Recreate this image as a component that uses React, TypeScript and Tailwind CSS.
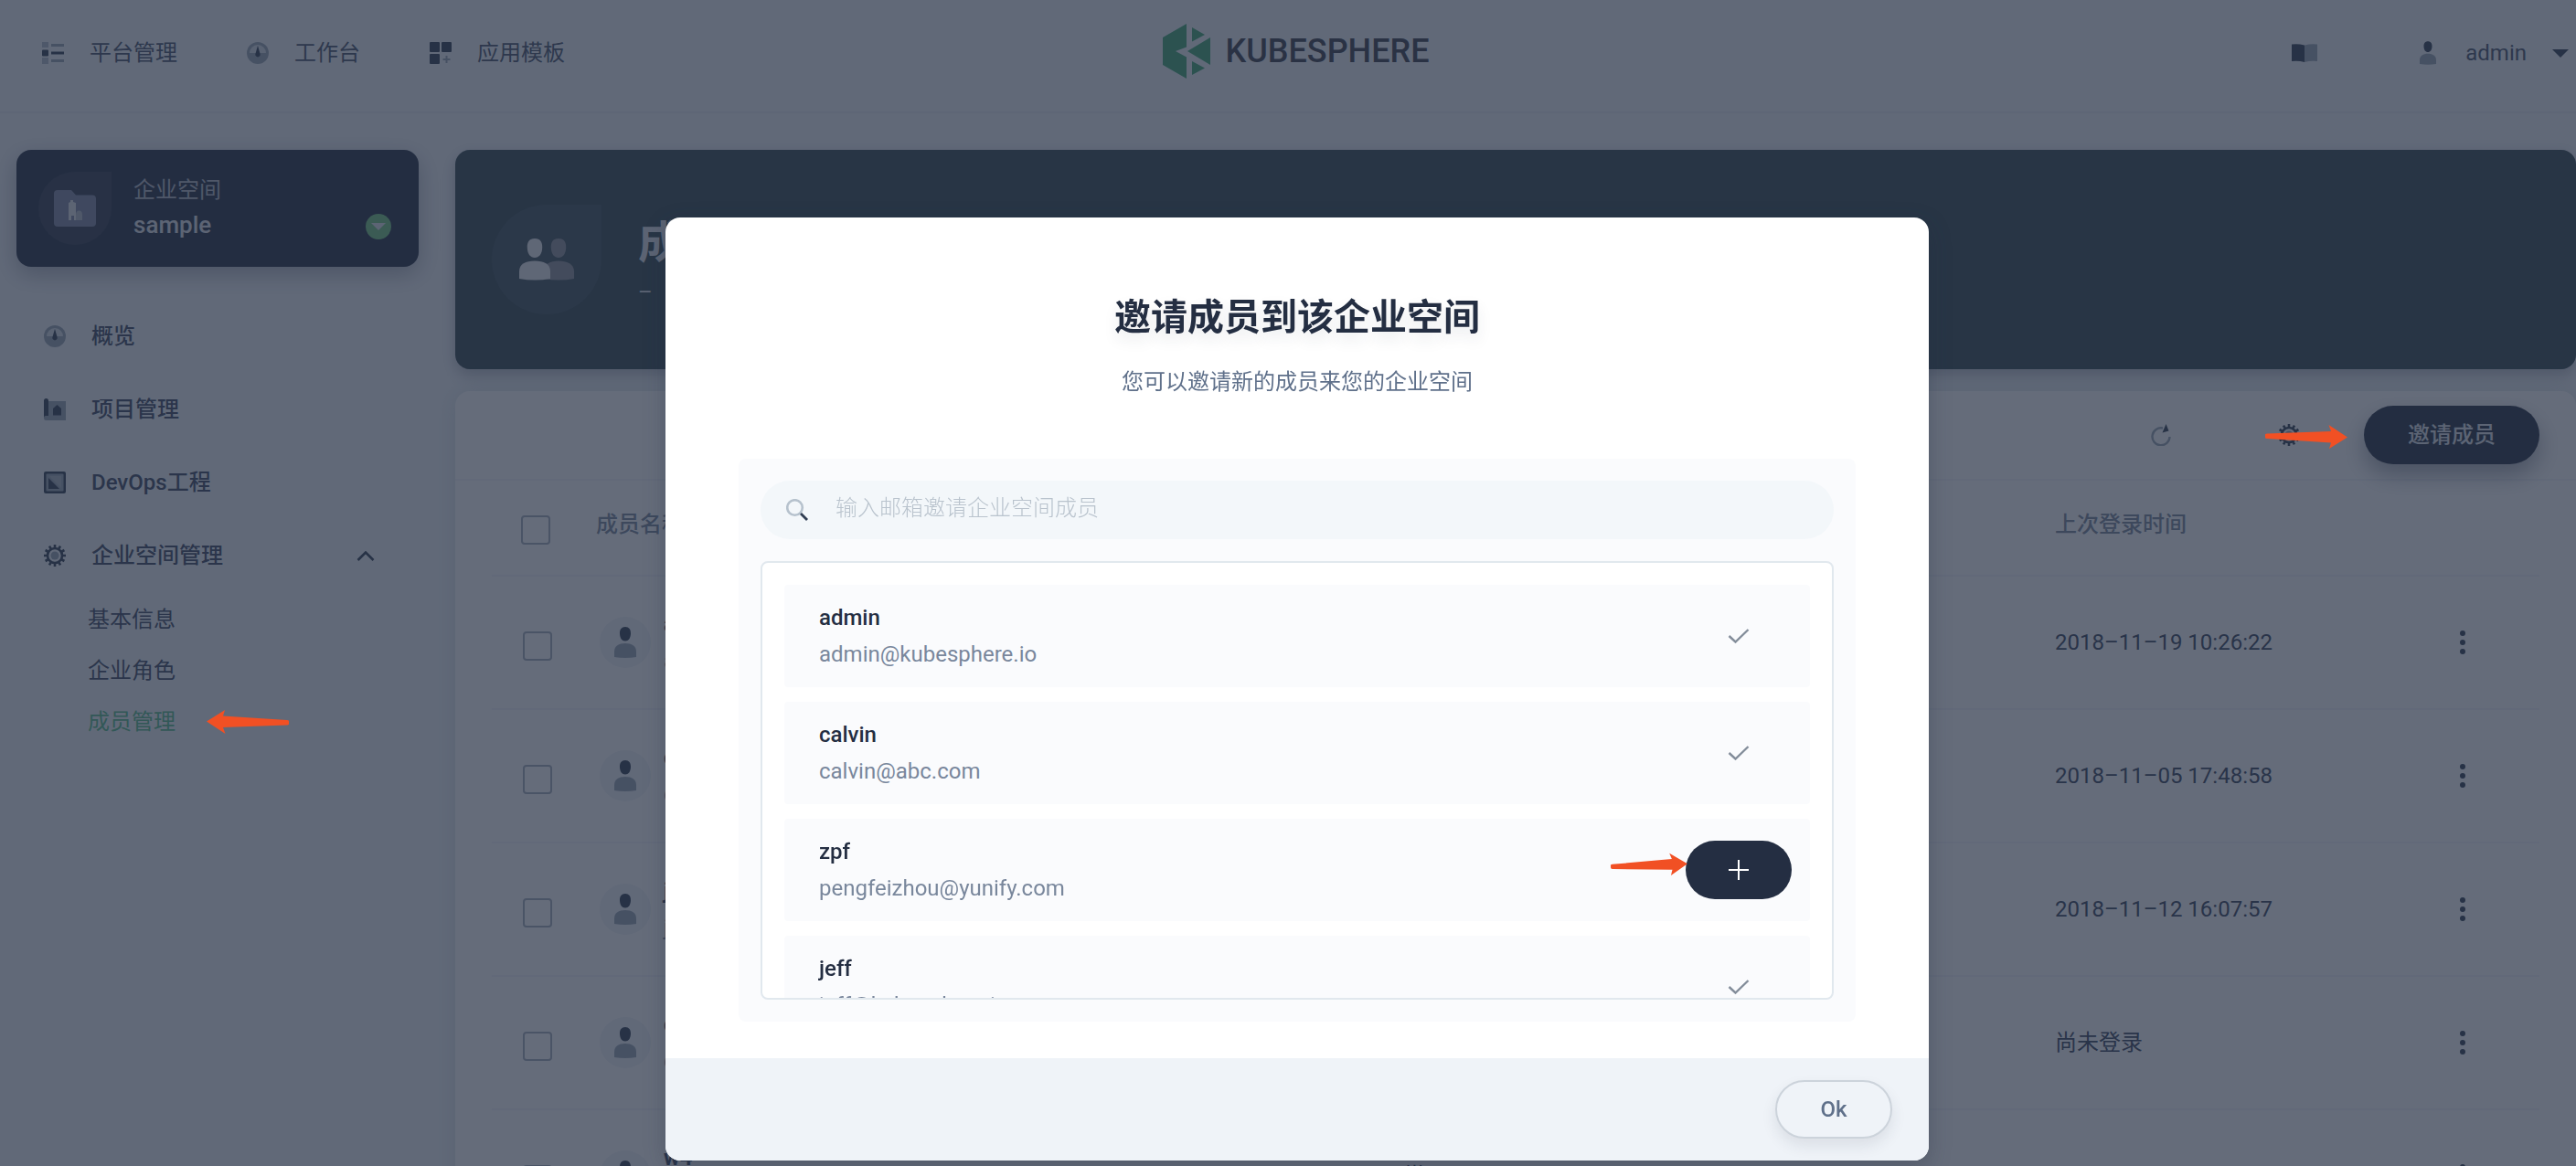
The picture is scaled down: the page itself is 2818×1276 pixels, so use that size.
import React from "react";

const DARK = "#303e52";
const LIGHT = "#98a5b3";

function ListIcon() {
  return (
    <svg className="size-6 shrink-0" viewBox="0 0 24 24" aria-hidden="true">
      <g fill={LIGHT}>
        <rect width="7" height="6" opacity=".7" />
        <rect y="17" width="7" height="7" opacity=".7" />
        <rect x="10" y="2" width="14" height="3" />
        <rect x="10" y="19" width="14" height="3" />
      </g>
      <g fill={DARK}>
        <rect y="8.500" width="7" height="7" rx="1" />
        <rect x="10" y="10.500" width="14" height="3" />
      </g>
    </svg>
  );
}

function GaugeIcon() {
  return (
    <svg className="size-6 shrink-0" viewBox="0 0 24 24" aria-hidden="true">
      <circle cx="12" cy="12" r="12" fill={LIGHT} />
      <path d="M3 12a9 9 0 0 1 18 0z" fill="#d5dde4" />
      <path d="M12 4l2.600 9a2.700 2.700 0 1 1-5.200 0z" fill={DARK} />
    </svg>
  );
}

function AppsIcon() {
  return (
    <svg className="size-6 shrink-0" viewBox="0 0 24 24" aria-hidden="true">
      <g fill={DARK}>
        <rect width="11" height="11" rx="1" />
        <rect x="13" width="11" height="11" rx="1" />
        <rect y="13" width="11" height="11" rx="1" />
      </g>
      <path d="M18.500 15v8M14.500 19h8" stroke={LIGHT} strokeWidth="2" />
    </svg>
  );
}

function ProjectIcon() {
  return (
    <svg className="size-6 shrink-0" viewBox="0 0 24 24" aria-hidden="true">
      <path d="M5 3h19v21H2.500a2.500 2.500 0 0 1 0-5H5z" fill={LIGHT} />
      <path d="M0 21V2.500a2.500 2.500 0 0 1 5 0V19H2.500A2.500 2.500 0 0 0 0 21z" fill={DARK} />
      <path d="M10 18.500V11l4.500-4L19 11v7.500z" fill={DARK} />
    </svg>
  );
}

function DevopsIcon() {
  return (
    <svg className="size-6 shrink-0" viewBox="0 0 24 24" aria-hidden="true">
      <rect width="24" height="24" rx="2" fill={DARK} />
      <rect x="2.500" y="2.500" width="19" height="19" rx="1" fill={LIGHT} />
      <path d="M6 5h13v13z" fill="#aab5c0" />
      <path d="M5 7v12h12z" fill={DARK} />
    </svg>
  );
}

function GearIcon() {
  return (
    <svg className="size-6 shrink-0" viewBox="0 0 24 24" aria-hidden="true">
      <g stroke={DARK} strokeWidth="2.600">
        {[0, 30, 60, 90, 120, 150].map((a) => (
          <path key={a} d="M12 0v4M12 20v4" transform={`rotate(${a} 12 12)`} />
        ))}
      </g>
      <circle cx="12" cy="12" r="8" fill="none" stroke={DARK} strokeWidth="2.600" />
      <circle cx="12" cy="12" r="4.500" fill={LIGHT} />
    </svg>
  );
}

function RefreshIcon() {
  return (
    <svg className="size-6 shrink-0" viewBox="0 0 24 24" aria-hidden="true">
      <path d="M14 4.500A9.500 9.500 0 1 0 21.500 14" fill="none" stroke={LIGHT} strokeWidth="2.400" />
      <path d="M17.500 0l3 7.500-7 2z" fill={DARK} />
    </svg>
  );
}

function BookIcon() {
  return (
    <svg className="h-5 w-7 shrink-0" viewBox="0 0 28 20" aria-hidden="true">
      <path d="M0 .5Q7-.5 14 1.500V20Q7 18 0 19z" fill={DARK} />
      <path d="M28 .5Q21-.5 14 1.500V20q7-2 14-1z" fill={LIGHT} />
    </svg>
  );
}

function UserIcon({ className }: { className: string }) {
  return (
    <svg className={className} viewBox="0 0 24 34" aria-hidden="true">
      <path d="M12 0c4 0 6.200 2.800 6 7.500-.2 5-2.500 8-6 8s-5.800-3-6-8C5.800 2.800 8 0 12 0z" fill={DARK} />
      <path d="M0 33v-6c0-6 5-9 12-9s12 3 12 9v6q-12 2-24 0z" fill={LIGHT} />
    </svg>
  );
}

function MembersIcon() {
  return (
    <svg className="h-[46px] w-[60px]" viewBox="0 0 60 46" aria-hidden="true">
      <g fill="#8d929b">
        <path d="M43 0c6 0 8.500 4 8.200 10-.3 7-3.500 11-8.200 11s-7.900-4-8.200-11C34.500 4 37 0 43 0z" />
        <path d="M27 44v-8c0-8 7-11.500 16-11.500S60 28 60 36v8q-17 3-33 0z" />
      </g>
      <g fill="#eceef2">
        <path d="M17 0c6 0 8.500 4 8.200 10C25 17 21.700 21 17 21S9 17 8.800 10C8.500 4 11 0 17 0z" />
        <path d="M0 44v-8c0-8 7-11.500 17-11.500S34 28 34 36v8q-17 3-34 0z" />
      </g>
    </svg>
  );
}

function WorkspaceIcon() {
  return (
    <svg className="h-10 w-[46px]" viewBox="0 0 46 40" aria-hidden="true">
      <path d="M4 0h15l5 5.500h18a4 4 0 0 1 4 4V36a4 4 0 0 1-4 4H4a4 4 0 0 1-4-4V4a4 4 0 0 1 4-4z" fill="#8088a4" />
      <path d="M24 33V27a3.500 4.500 0 0 1 7 0v6z" fill="#b4bcc6" />
      <path d="M16 33V14l2-1v-2h3v2l3 1v19h-2v-5h-3v5z" fill="#dfe3e8" />
    </svg>
  );
}

function LogoMark() {
  return (
    <svg className="h-[60px] w-[52px]" viewBox="0 0 52 60" aria-hidden="true">
      <g fill="#40a874">
        <path d="M26 0v25.500L14 30l12 6.500V60L0 45V15z" />
        <path d="M32 4l14 8-14 7.500z" />
        <path d="M52 15v30L27 30z" />
        <path d="M32 41l14 7.500L32 56z" />
      </g>
    </svg>
  );
}

function Arrow({ className }: { className: string }) {
  return (
    <svg className={className} viewBox="0 0 90 26" aria-hidden="true">
      <path d="M90 13.500L70 26l2-6.500L2 15a2 2 0 0 1 0-5.500L72 7 69.500 0z" fill="#f15024" />
    </svg>
  );
}

function CheckIcon() {
  return (
    <svg className="h-4 w-6" viewBox="0 0 24 16" aria-label="已添加" role="img">
      <path d="M1.500 8l7 6.500L22.500 1" fill="none" stroke="#838d9a" strokeWidth="2.400" />
    </svg>
  );
}

const topNav = [
  { label: "平台管理", icon: <ListIcon /> },
  { label: "工作台", icon: <GaugeIcon /> },
  { label: "应用模板", icon: <AppsIcon /> },
];

const sideNav = [
  { label: "概览", icon: <GaugeIcon /> },
  { label: "项目管理", icon: <ProjectIcon /> },
  { label: "DevOps工程", icon: <DevopsIcon /> },
];

const members = [
  { name: "admin", mail: "admin@kubesphere.io", time: "2018–11–19 10:26:22" },
  { name: "calvin", mail: "calvin@abc.com", time: "2018–11–05 17:48:58" },
  { name: "jeff", mail: "jeff@kubesphere.io", time: "2018–11–12 16:07:57" },
  { name: "cici", mail: "cici@kubesphere.io", time: "尚未登录" },
  { name: "w4", mail: "w4@kubesphere.io", time: "" },
];

const candidates = [
  { name: "admin", mail: "admin@kubesphere.io", joined: true },
  { name: "calvin", mail: "calvin@abc.com", joined: true },
  { name: "zpf", mail: "pengfeizhou@yunify.com", joined: false },
  { name: "jeff", mail: "jeff@kubesphere.io", joined: true },
];

function Header() {
  return (
    <header className="grid h-[124px] grid-cols-[1fr_auto_1fr] items-center border-b-2 border-[#e6ebf1] pr-1 pb-1.5 pl-[22px]">
      <nav className="ml-6 flex gap-[76px]">
        {topNav.map((item) => (
          <a key={item.label} href="#" className="flex items-center gap-7 text-[#465369]">
            {item.icon}
            {item.label}
          </a>
        ))}
      </nav>
      <a href="#" className="flex items-center gap-4 pb-1 text-4xl font-medium text-[#3b3f4b]">
        <LogoMark />
        KUBESPHERE
      </a>
      <div className="flex items-center justify-end text-[#465369]">
        <button type="button" aria-label="文档" className="mr-28">
          <BookIcon />
        </button>
        <button type="button" className="flex items-center pr-1">
          <UserIcon className="mr-8 h-[26px] w-[18px]" />
          <span className="mr-7">admin</span>
          <svg className="h-[9px] w-[18px]" viewBox="0 0 18 9" aria-hidden="true">
            <path d="M0 0h18L9 9z" fill={DARK} />
          </svg>
        </button>
      </div>
    </header>
  );
}

function Sidebar() {
  return (
    <aside className="w-[440px] shrink-0">
      <button
        type="button"
        className="flex h-32 w-full items-center rounded-2xl bg-[#242e42] pr-[30px] pl-6 text-left shadow-[0_8px_24px_rgba(36,46,66,0.35)]"
      >
        <span className="flex size-20 items-center justify-center rounded-full rounded-tr-none bg-[#323b4e]">
          <WorkspaceIcon />
        </span>
        <span className="ml-6 flex-1">
          <span className="block leading-9 text-[#b4bac5]">企业空间</span>
          <span className="block text-[26px] leading-10 font-medium text-[#dfe3ea]">sample</span>
        </span>
        <span className="mt-10 flex size-7 items-center justify-center rounded-full bg-[#74c580]">
          <svg className="h-2 w-4" viewBox="0 0 16 8" aria-hidden="true">
            <path d="M0 0h16L8 8z" fill="#dfe3ea" />
          </svg>
        </span>
      </button>
      <nav className="mt-9 text-[#3c4961]">
        {sideNav.map((item) => (
          <a key={item.label} href="#" className="flex h-20 items-center gap-7 pl-[30px] font-medium">
            {item.icon}
            {item.label}
          </a>
        ))}
        <button type="button" aria-expanded="true" className="flex h-20 w-full items-center gap-7 pr-12 pl-[30px] font-medium">
          <GearIcon />
          企业空间管理
          <svg className="ml-auto h-[11px] w-5" viewBox="0 0 20 11" aria-hidden="true">
            <path d="M1.500 10L10 1.500l8.500 8.500" fill="none" stroke={DARK} strokeWidth="2.600" />
          </svg>
        </button>
        <div className="pt-0.5 pl-[78px]">
          <a href="#" className="flex h-14 items-center">基本信息</a>
          <a href="#" className="flex h-14 items-center">企业角色</a>
          <a href="#" className="flex h-14 items-center gap-[34px] text-[#55bc8a]">
            成员管理
            <Arrow className="relative z-30 h-[26px] w-[90px] rotate-180" />
          </a>
        </div>
      </nav>
    </aside>
  );
}

function Checkbox({ label }: { label: string }) {
  return (
    <input
      type="checkbox"
      aria-label={label}
      className="block size-8 appearance-none rounded-[4px] border-2 border-[#a3aebb]"
    />
  );
}

function MembersPanel() {
  return (
    <section className="mt-6 min-h-[900px] rounded-2xl bg-white shadow-[0_0_24px_rgba(160,190,190,0.35)]">
      <div className="flex h-[98px] items-center justify-end border-b-2 border-[#f3f5fa] pr-10">
        <button type="button" aria-label="刷新" className="mr-[116px]">
          <RefreshIcon />
        </button>
        <button type="button" aria-label="设置" className="mr-[70px]">
          <GearIcon />
        </button>
        <div className="relative">
          <Arrow className="absolute top-[21px] right-full z-30 mr-[18px] h-[26px] w-[90px]" />
          <button
            type="button"
            className="h-16 rounded-full bg-[#242e42] px-12 font-medium text-[#dfe3ea] shadow-[0_12px_24px_rgba(36,46,66,0.4)]"
          >
            邀请成员
          </button>
        </div>
      </div>
      <div className="px-10">
        <table className="w-full table-fixed text-left">
          <colgroup>
            <col className="w-[114px]" />
            <col className="w-[38%]" />
            <col />
            <col className="w-[430px]" />
            <col className="w-[100px]" />
          </colgroup>
          <thead>
            <tr className="h-[104px] border-b-2 border-[#f3f5fa] text-[#79879c]">
              <th className="pt-1 pl-8">
                <Checkbox label="全选" />
              </th>
              <th className="pb-2 font-medium">成员名称</th>
              <th className="pb-2 font-medium">状态</th>
              <th className="pb-2 font-medium">上次登录时间</th>
              <th />
            </tr>
          </thead>
          <tbody>
            {members.map((m) => (
              <tr key={m.name} className="h-[146px] border-b-2 border-[#f3f5fa] text-[#36435c]">
                <td className="pt-2 pl-[34px]">
                  <Checkbox label={m.name} />
                </td>
                <td>
                  <div className="flex items-center pl-1">
                    <span className="flex size-14 shrink-0 items-center justify-center rounded-full bg-[#f0f3f8]">
                      <UserIcon className="h-[34px] w-6" />
                    </span>
                    <div className="ml-3.5">
                      <div className="h-10 leading-10 font-bold">{m.name}</div>
                      <div className="h-10 leading-10 text-[#79879c]">{m.mail}</div>
                    </div>
                  </div>
                </td>
                <td className="pl-2">正常</td>
                <td>{m.time}</td>
                <td>
                  <button type="button" aria-label="更多操作" className="ml-[13px] block">
                    <svg className="h-7 w-1.5" viewBox="0 0 6 28" aria-hidden="true">
                      <g fill={DARK}>
                        <circle cx="3" cy="4" r="3" />
                        <circle cx="3" cy="14" r="3" />
                        <circle cx="3" cy="24" r="3" />
                      </g>
                    </svg>
                  </button>
                </td>
              </tr>
            ))}
          </tbody>
        </table>
      </div>
    </section>
  );
}

function InviteDialog() {
  return (
    <div className="fixed inset-0 z-20 flex items-start justify-center bg-[#242e42]/70 pt-[238px] pl-5">
      <div
        role="dialog"
        aria-modal="true"
        aria-labelledby="invite-title"
        className="w-full max-w-[1382px] overflow-hidden rounded-2xl bg-white shadow-[0_8px_24px_rgba(36,46,66,0.3)]"
      >
        <div className="pt-20 text-center">
          <h2 id="invite-title" className="text-[40px] leading-[60px] font-semibold text-[#242e42] [text-shadow:0_8px_16px_rgba(35,45,65,0.1)]">
            邀请成员到该企业空间
          </h2>
          <p className="mt-[22px] leading-9 text-[#5f708a]">您可以邀请新的成员来您的企业空间</p>
        </div>
        <div className="mx-20 mt-[66px] mb-10 rounded-lg bg-[#fafbfd] p-6">
          <label className="flex h-16 items-center gap-[30px] rounded-full bg-[#f3f7fa] px-7">
            <svg className="size-6 shrink-0" viewBox="0 0 24 24" aria-hidden="true">
              <circle cx="9.500" cy="9.500" r="8.300" fill="none" stroke="#b6c2cd" strokeWidth="2.600" />
              <path d="M16 16l7 7" stroke={DARK} strokeWidth="2.800" />
            </svg>
            <input
              type="text"
              aria-label="搜索成员"
              placeholder="输入邮箱邀请企业空间成员"
              className="flex-1 bg-transparent pb-1 font-light outline-none placeholder:text-[#b9c3cd]"
            />
          </label>
          <ul className="mt-6 flex h-[480px] flex-col gap-4 overflow-hidden rounded-lg border-2 border-[#e1e8ee] bg-white p-6">
            {candidates.map((c) => (
              <li key={c.name} className="flex h-28 shrink-0 items-center rounded bg-[#fafbfd] pr-5 pl-[38px]">
                <div className="flex-1">
                  <div className="leading-10 font-medium text-[#242e42]">{c.name}</div>
                  <div className="leading-10 text-[#79879c]">{c.mail}</div>
                </div>
                {c.joined ? (
                  <span className="flex w-[116px] justify-center">
                    <CheckIcon />
                  </span>
                ) : (
                  <div className="relative">
                    <Arrow className="absolute top-3.5 left-[-82px] h-[26px] w-[84px] -rotate-3" />
                    <button
                      type="button"
                      aria-label="添加"
                      className="flex h-16 w-[116px] items-center justify-center rounded-full bg-[#242e42]"
                    >
                      <svg className="size-6" viewBox="0 0 24 24" aria-hidden="true">
                        <path d="M12 1v22M1 12h22" stroke="#fff" strokeWidth="2" />
                      </svg>
                    </button>
                  </div>
                )}
              </li>
            ))}
          </ul>
        </div>
        <footer className="flex h-28 items-center justify-end bg-[#eff3f8] px-10">
          <button
            type="button"
            className="h-16 w-32 rounded-full border-2 border-[#ccd3db] bg-[#eff3f8] font-medium text-[#5f708a] shadow-[0_8px_16px_rgba(36,46,66,0.1)]"
          >
            Ok
          </button>
        </footer>
      </div>
    </div>
  );
}

export default function App() {
  return (
    <div className="h-screen overflow-hidden bg-[#f2f5f9] font-['Roboto','Noto_Sans_CJK_SC',sans-serif] text-2xl">
      <Header />
      <div className="flex gap-10 pt-10 pl-[18px]">
        <Sidebar />
        <main className="min-w-0 flex-1">
          <section className="flex h-60 items-center gap-10 rounded-2xl bg-[#32474f] pl-10 shadow-[0_6px_16px_rgba(36,46,66,0.3)]">
            <div className="flex size-[120px] items-center justify-center rounded-full rounded-tr-none bg-[#3f525b]">
              <MembersIcon />
            </div>
            <div className="text-[#dfe3ea]">
              <h1 className="text-5xl leading-[72px] font-semibold">成员管理</h1>
              <p className="leading-9">–</p>
            </div>
          </section>
          <MembersPanel />
        </main>
      </div>
      <InviteDialog />
    </div>
  );
}
